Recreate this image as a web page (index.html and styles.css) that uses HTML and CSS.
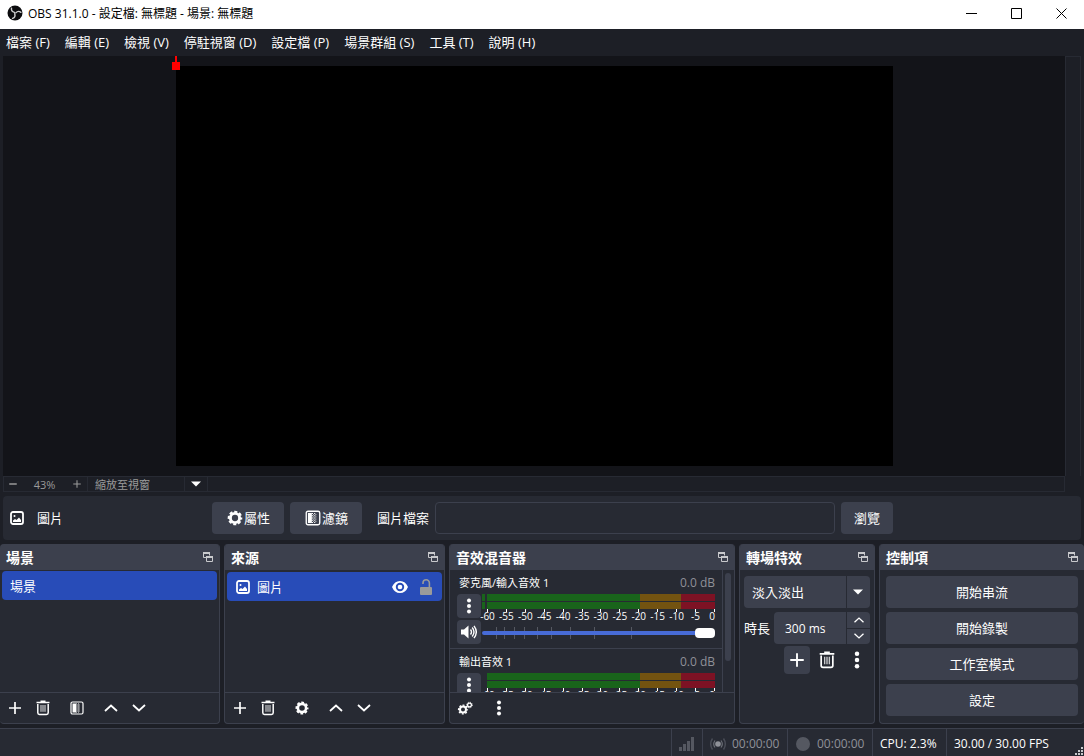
FILE: index.html
```
<!DOCTYPE html>
<html lang="zh-Hant">
<head>
    <meta charset="UTF-8">
    <meta name="viewport" content="width=device-width, initial-scale=1.0">
    <title>OBS 31.1.0</title>
    <link rel="stylesheet" href="styles.css">
</head>
<body>
    <!-- Shared icons -->
    <svg class="sprite" aria-hidden="true">
        <symbol id="i-plus" viewBox="0 0 16 16"><path d="M8 2v12M2 8h12" stroke="currentColor" stroke-width="1.700" fill="none"/></symbol>
        <symbol id="i-minus" viewBox="0 0 16 16"><path d="M2 8h12" stroke="currentColor" stroke-width="2.4" fill="none"/></symbol>
        <symbol id="i-trash" viewBox="0 0 16 16">
            <path d="M5.500 1.300h5M1.500 2.600h13" stroke="currentColor" stroke-width="1.500" fill="none"/>
            <path d="M2.800 4v8.800q0 1.700 1.700 1.700h7q1.700 0 1.700-1.700V4" stroke="currentColor" stroke-width="1.500" fill="none"/>
            <path d="M6 5v6.800M8 5v6.800M10 5v6.800" stroke="currentColor" stroke-width=".9" fill="none"/>
        </symbol>
        <symbol id="i-filter" viewBox="0 0 16 16">
            <rect x="2" y="2" width="12" height="12" rx="1.500" stroke="currentColor" stroke-width="1.200" fill="none"/>
            <path d="M3.500 3.500h3.500v9H3.500z" fill="currentColor"/>
            <path d="M7.500 3.500v9M9.500 3.500v9" stroke="currentColor" stroke-width="1" stroke-dasharray="1 1" fill="none"/>
            <path d="M8.500 4.500v8M10.500 4.500v8" stroke="currentColor" stroke-width="1" stroke-dasharray="1 1" opacity=".6" fill="none"/>
        </symbol>
        <symbol id="i-up" viewBox="0 0 16 16"><path d="M2 11l6-5.500 6 5.500" stroke="currentColor" stroke-width="1.800" fill="none"/></symbol>
        <symbol id="i-down" viewBox="0 0 16 16"><path d="M2 5l6 5.500 6-5.500" stroke="currentColor" stroke-width="1.800" fill="none"/></symbol>
        <symbol id="i-gear" viewBox="0 0 16 16">
            <circle cx="8" cy="8" r="4.100" stroke="currentColor" stroke-width="2.600" fill="none"/>
            <circle cx="8" cy="8" r="5.600" stroke="currentColor" stroke-width="1.800" stroke-dasharray="2.700 1.698" stroke-dashoffset="1.350" fill="none"/>
        </symbol>
        <symbol id="i-gears" viewBox="0 0 16 16">
            <circle cx="6" cy="9.500" r="3" stroke="currentColor" stroke-width="2" fill="none"/>
            <circle cx="6" cy="9.500" r="4.400" stroke="currentColor" stroke-width="1.400" stroke-dasharray="1.900 1.556" stroke-dashoffset=".95" fill="none"/>
            <circle cx="12.500" cy="5" r="1.900" stroke="currentColor" stroke-width="1.300" fill="none"/>
            <circle cx="12.500" cy="5" r="2.800" stroke="currentColor" stroke-width="1" stroke-dasharray="1.100 1.100" fill="none"/>
        </symbol>
        <symbol id="i-dots" viewBox="0 0 16 16"><circle cx="8" cy="2.500" r="2"/><circle cx="8" cy="8" r="2"/><circle cx="8" cy="13.500" r="2"/></symbol>
        <symbol id="i-image" viewBox="0 0 16 16">
            <rect x="2" y="2" width="12" height="12" rx="2" stroke="currentColor" stroke-width="1.800" fill="none"/>
            <circle cx="5.500" cy="6" r="1"/>
            <path d="M4 12v-1.500l2-1.500 1.500 1L10 7.500l2 2.500v2z"/>
        </symbol>
        <symbol id="i-eye" viewBox="0 0 16 16">
            <path fill-rule="evenodd" d="M0 8Q2.500 2 8 2t8 6Q13.500 14 8 14T0 8zM8 3.800a4.200 4.200 0 1 0 0 8.400 4.200 4.200 0 0 0 0-8.400z"/>
            <circle cx="8" cy="8" r="2.300"/>
        </symbol>
        <symbol id="i-unlock" viewBox="0 0 16 16">
            <rect x="2" y="8" width="12" height="8" rx="1"/>
            <path d="M5 5V4a3.200 3.200 0 0 1 6.400 0v4.500" stroke="currentColor" stroke-width="1.600" fill="none"/>
        </symbol>
        <symbol id="i-float" viewBox="0 0 12 12">
            <path d="M1.500 6.500v-4h6v2M1.500 6.500h3M4.500 6.500v4h6v-4" stroke="currentColor" fill="none"/>
            <path d="M1 1h7v2H1zM4 5h7v2H4z"/>
        </symbol>
        <symbol id="i-caret" viewBox="0 0 10 6"><path d="M0 .5h10L5 5.500z"/></symbol>
        <symbol id="i-speaker" viewBox="0 0 16 16">
            <path d="M0 5.500h3L7.500 1.500v13L3 10.500H0z"/>
            <path d="M9.500 5.500q2 2.500 0 5M11.200 3.500q3.600 4.500 0 9M13 1.800q4.600 6.200 0 12.400" stroke="currentColor" stroke-width="1.400" fill="none"/>
        </symbol>
    </svg>

    <header class="titlebar">
        <svg class="logo" viewBox="0 0 16 16">
            <circle cx="8" cy="8" r="7.500" fill="#0c0c0e"/>
            <g fill="none" stroke="#d0d0d0" stroke-width="1.400" stroke-linecap="round">
                <path d="M4.500 3.200q-.6 3.400 3 4.200"/>
                <path d="M4.500 3.200q-.6 3.400 3 4.200" transform="rotate(120 8 8)"/>
                <path d="M4.500 3.200q-.6 3.400 3 4.200" transform="rotate(240 8 8)"/>
            </g>
        </svg>
        <span class="title">OBS 31.1.0 - 設定檔: 無標題 - 場景: 無標題</span>
        <button class="win-btn" aria-label="最小化"><svg viewBox="0 0 11 11"><path d="M0 5.500h11"/></svg></button>
        <button class="win-btn" aria-label="最大化"><svg viewBox="0 0 11 11"><path d="M.5.5h10v10H.5z"/></svg></button>
        <button class="win-btn" aria-label="關閉"><svg viewBox="0 0 11 11"><path d="M.5.5l10 10M10.500.5l-10 10"/></svg></button>
    </header>

    <nav class="menubar">
        <button>檔案 (F)</button>
        <button>編輯 (E)</button>
        <button>檢視 (V)</button>
        <button>停駐視窗 (D)</button>
        <button>設定檔 (P)</button>
        <button>場景群組 (S)</button>
        <button>工具 (T)</button>
        <button>說明 (H)</button>
    </nav>

    <!-- Preview -->
    <main class="preview">
        <div class="stage">
            <div class="canvas"><span class="handle"></span></div>
        </div>
        <div class="preview-scroll"></div>
    </main>
    <div class="zoombar">
        <button class="zoom-out" aria-label="縮小"><svg><use href="#i-minus"/></svg></button>
        <span class="zoom-value">43%</span>
        <button class="zoom-in" aria-label="放大"><svg><use href="#i-plus"/></svg></button>
        <span class="zoom-mode">縮放至視窗</span>
        <button class="zoom-menu" aria-label="縮放模式"><svg class="caret"><use href="#i-caret"/></svg></button>
    </div>

    <!-- Source context bar -->
    <section class="context">
        <div class="context-source"><svg><use href="#i-image"/></svg><span>圖片</span></div>
        <button class="btn tool"><svg><use href="#i-gear"/></svg>屬性</button>
        <button class="btn tool"><svg><use href="#i-filter"/></svg>濾鏡</button>
        <label for="image-file">圖片檔案</label>
        <input id="image-file" type="text">
        <button class="btn browse">瀏覽</button>
    </section>

    <div class="docks">
        <section class="dock scenes">
            <h2>場景<svg><use href="#i-float"/></svg></h2>
            <div class="dock-body">
                <button class="row selected">場景</button>
            </div>
            <div class="toolbar">
                <button aria-label="新增"><svg><use href="#i-plus"/></svg></button>
                <button aria-label="移除"><svg><use href="#i-trash"/></svg></button>
                <button class="group" aria-label="濾鏡"><svg><use href="#i-filter"/></svg></button>
                <button class="group" aria-label="上移"><svg><use href="#i-up"/></svg></button>
                <button aria-label="下移"><svg><use href="#i-down"/></svg></button>
            </div>
        </section>

        <section class="dock sources">
            <h2>來源<svg><use href="#i-float"/></svg></h2>
            <div class="dock-body">
                <div class="row selected">
                    <svg><use href="#i-image"/></svg>
                    <span class="row-name">圖片</span>
                    <button aria-label="顯示"><svg><use href="#i-eye"/></svg></button>
                    <button class="lock" aria-label="鎖定"><svg><use href="#i-unlock"/></svg></button>
                </div>
            </div>
            <div class="toolbar">
                <button aria-label="新增"><svg><use href="#i-plus"/></svg></button>
                <button aria-label="移除"><svg><use href="#i-trash"/></svg></button>
                <button class="group" aria-label="屬性"><svg><use href="#i-gear"/></svg></button>
                <button class="group" aria-label="上移"><svg><use href="#i-up"/></svg></button>
                <button aria-label="下移"><svg><use href="#i-down"/></svg></button>
            </div>
        </section>

        <section class="dock mixer">
            <h2>音效混音器<svg><use href="#i-float"/></svg></h2>
            <div class="dock-body">
                <div class="channels">
                    <div class="channel">
                        <div class="channel-head"><label for="vol-mic">麥克風/輸入音效 1</label><output>0.0 dB</output></div>
                        <div class="channel-body">
                            <div class="channel-btns">
                                <button class="btn" aria-label="選項"><svg><use href="#i-dots"/></svg></button>
                                <button class="btn" aria-label="靜音"><svg><use href="#i-speaker"/></svg></button>
                            </div>
                            <div class="channel-levels">
                                <div class="meter live"><i></i><i></i></div>
                                <div class="scale">
                                    <span>-60</span><span>-55</span><span>-50</span><span>-45</span><span>-40</span><span>-35</span><span>-30</span><span>-25</span><span>-20</span><span>-15</span><span>-10</span><span>-5</span><span>0</span>
                                </div>
                                <div class="fader">
                                    <svg viewBox="0 0 233 12" preserveAspectRatio="none"><path d="M14.500 0v12M22.500 0v12M32.500 0v12M42.500 0v12M55.500 0v12M69.500 0v12M88.500 0v12M112.500 0v12M149.500 0v12"/></svg>
                                    <input id="vol-mic" type="range" min="0" max="100" value="100">
                                </div>
                            </div>
                        </div>
                    </div>
                    <div class="channel">
                        <div class="channel-head"><label for="vol-out">輸出音效 1</label><output>0.0 dB</output></div>
                        <div class="channel-body">
                            <div class="channel-btns">
                                <button class="btn" aria-label="選項"><svg><use href="#i-dots"/></svg></button>
                                <button class="btn" aria-label="靜音"><svg><use href="#i-speaker"/></svg></button>
                            </div>
                            <div class="channel-levels">
                                <div class="meter"><i></i><i></i></div>
                                <div class="scale">
                                    <span>-60</span><span>-55</span><span>-50</span><span>-45</span><span>-40</span><span>-35</span><span>-30</span><span>-25</span><span>-20</span><span>-15</span><span>-10</span><span>-5</span><span>0</span>
                                </div>
                                <div class="fader">
                                    <input id="vol-out" type="range" min="0" max="100" value="100">
                                </div>
                            </div>
                        </div>
                    </div>
                </div>
                <div class="scrollbar"><div class="thumb"></div></div>
            </div>
            <div class="toolbar">
                <button aria-label="進階音效屬性"><svg><use href="#i-gears"/></svg></button>
                <button class="group" aria-label="選單"><svg><use href="#i-dots"/></svg></button>
            </div>
        </section>

        <section class="dock transitions">
            <h2>轉場特效<svg><use href="#i-float"/></svg></h2>
            <div class="dock-body">
                <div class="select">
                    <select aria-label="轉場特效"><option>淡入淡出</option></select>
                    <svg class="caret"><use href="#i-caret"/></svg>
                </div>
                <div class="duration">
                    <label for="duration">時長</label>
                    <div class="spin">
                        <input id="duration" type="text" value="300 ms">
                        <div class="spin-btns">
                            <button aria-label="增加"><svg><use href="#i-up"/></svg></button>
                            <button aria-label="減少"><svg><use href="#i-down"/></svg></button>
                        </div>
                    </div>
                </div>
                <div class="transition-tools">
                    <button class="btn" aria-label="新增"><svg><use href="#i-plus"/></svg></button>
                    <button aria-label="移除"><svg><use href="#i-trash"/></svg></button>
                    <button aria-label="選項"><svg><use href="#i-dots"/></svg></button>
                </div>
            </div>
        </section>

        <section class="dock controls">
            <h2>控制項<svg><use href="#i-float"/></svg></h2>
            <div class="dock-body">
                <button class="btn">開始串流</button>
                <button class="btn">開始錄製</button>
                <button class="btn">工作室模式</button>
                <button class="btn">設定</button>
            </div>
        </section>
    </div>

    <footer class="statusbar">
        <div class="cell">
            <svg viewBox="0 0 16 16"><path d="M0 11h3v4H0zM4 8h3v7H4zM8 5h3v10H8zM12 1h3v14h-3z" fill="#555861"/></svg>
        </div>
        <div class="cell muted">
            <svg viewBox="0 0 16 16">
                <circle cx="8" cy="8" r="2.800"/>
                <path d="M5 4.500q-2.600 3.500 0 7M11 4.500q2.600 3.500 0 7" stroke="#6c6f77" stroke-width="1.200" fill="none"/>
                <path d="M2.500 2.500q-3.600 5.500 0 11M13.500 2.500q3.600 5.500 0 11" stroke="#4a4d57" stroke-width="1.400" fill="none"/>
            </svg>
            <span>00:00:00</span>
        </div>
        <div class="cell muted">
            <svg viewBox="0 0 16 16"><circle cx="8" cy="8" r="7" fill="#555861"/></svg>
            <span>00:00:00</span>
        </div>
        <div class="cell cpu">CPU: 2.3%</div>
        <div class="cell fps">30.00 / 30.00 FPS</div>
        <svg class="grip" viewBox="0 0 9 9"><path d="M6 0h2v2H6zM3 3h2v2H3zM6 3h2v2H6zM0 6h2v2H0zM3 6h2v2H3zM6 6h2v2H6z"/></svg>
    </footer>
</body>
</html>
```
FILE: styles.css
```
* {
    box-sizing: border-box;
}
body {
    margin: 0;
    height: 100vh;
    display: flex;
    flex-direction: column;
    background-color: #1d1f26;
    color: #fefefe;
    font-family: "Open Sans", "Noto Sans CJK TC", sans-serif;
    font-size: 13px;
    line-height: 16px;
    overflow: hidden;
}
button, input, select {
    font: inherit;
    color: inherit;
    margin: 0;
    padding: 0;
    border: none;
    background: none;
}
button {
    display: flex;
    align-items: center;
    justify-content: center;
}
svg {
    display: block;
    width: 16px;
    height: 16px;
    fill: currentColor;
    flex: none;
}
.sprite {
    position: absolute;
    width: 0;
    height: 0;
}
.caret {
    width: 10px;
    height: 6px;
}
.btn {
    background-color: #3c404d;
    border-radius: 4px;
}
.btn:hover {
    background-color: #4e5262;
}

/* Title bar */
.titlebar {
    height: 29px;
    flex: none;
    display: flex;
    align-items: center;
    padding-left: 7px;
    background-color: #fff;
    color: #000;
    font-size: 12px;
}
.title {
    flex: 1;
    margin-left: 5px;
    padding-bottom: 2px;
}
.titlebar .logo {
    margin-bottom: 3px;
}
.win-btn {
    width: 45px;
    height: 27px;
    align-self: flex-start;
}
.win-btn svg {
    width: 11px;
    height: 11px;
    fill: none;
    stroke: #000;
}

/* Menu */
.menubar {
    height: 27px;
    flex: none;
    display: flex;
    gap: 15px;
    padding: 0 6px 2px;
}

/* Preview */
.preview {
    flex: 1;
    min-height: 0;
    display: flex;
    margin: 0 3px;
}
.stage {
    flex: 1;
    display: flex;
    justify-content: center;
    padding: 10px 0;
    background-color: #131419;
}
.canvas {
    position: relative;
    height: 100%;
    aspect-ratio: 717 / 400;
    background-color: #000;
}
.handle {
    position: absolute;
    top: -4px;
    left: -4px;
    width: 8px;
    height: 8px;
    background-color: #f00;
}
.handle::before {
    content: "";
    position: absolute;
    left: 3px;
    bottom: 8px;
    width: 2px;
    height: 6px;
    background-color: #f00;
}
.preview-scroll {
    width: 16px;
    border: 1px solid #272a33;
    border-bottom: none;
}
.zoombar {
    height: 16px;
    flex: none;
    display: flex;
    align-items: stretch;
    margin: 0 19px 0 3px;
    border: 1px solid #272a33;
    color: #9a9a9a;
    font-size: 11px;
    line-height: 15px;
}
.zoombar svg {
    width: 10px;
    height: 10px;
}
.zoombar .caret {
    height: 6px;
    color: #fefefe;
}
.zoom-out {
    width: 18px;
}
.zoom-value {
    width: 45px;
    text-align: center;
}
.zoom-in {
    width: 20px;
}
.zoom-in svg {
    stroke-width: 2;
}
.zoom-mode {
    width: 97px;
    padding-left: 7px;
    border-left: 1px solid #272a33;
}
.zoom-menu {
    width: 24px;
    border: solid #272a33;
    border-width: 0 1px;
}

/* Source context bar */
.context {
    flex: none;
    display: flex;
    align-items: center;
    gap: 6px;
    margin: 4px 3px;
    padding: 6px;
    background-color: #272a33;
    border-radius: 4px;
}
.context-source {
    display: flex;
    align-items: center;
    gap: 12px;
    width: 197px;
}
.context .btn {
    height: 32px;
}
.context .tool {
    width: 72px;
}
.context .tool svg {
    width: 18px;
    height: 18px;
}
.context label {
    margin-left: 9px;
}
.context input {
    width: 400px;
    height: 32px;
    padding: 0 8px;
    border: 1px solid #3c404d;
    border-radius: 4px;
}
.browse {
    width: 52px;
}

/* Docks */
.docks {
    flex: none;
    height: 180px;
    display: grid;
    grid-template-columns: 220fr 221fr 286fr 136fr 205fr;
    gap: 4px;
}
.dock {
    min-width: 0;
    display: flex;
    flex-direction: column;
    border: 1px solid #3c404d;
    border-top: none;
    border-radius: 4px;
    background-color: #272a33;
    overflow: hidden;
}
.dock h2 {
    height: 26px;
    flex: none;
    display: flex;
    align-items: center;
    justify-content: space-between;
    margin: 0;
    padding: 2px 5px 0 6px;
    background-color: #3c404d;
    font-size: 14px;
}
.dock h2 svg {
    width: 12px;
    height: 12px;
    margin-bottom: 2px;
    color: #c8c9cc;
}
.dock-body {
    flex: 1;
    min-height: 0;
}
.toolbar {
    height: 31px;
    flex: none;
    display: flex;
    padding-left: 1px;
    border-top: 1px solid #3c404d;
}
.toolbar button {
    width: 28px;
}
.toolbar .group {
    margin-left: 6px;
}
.scenes {
    border-left: none;
}
.scenes .dock-body {
    padding: 1px 2px;
}
.sources .dock-body {
    padding: 2px;
}
.row {
    width: 100%;
    height: 29px;
    display: flex;
    align-items: center;
    justify-content: flex-start;
    padding: 0 8px;
    border-radius: 4px;
}
.row.selected {
    background-color: #284cb8;
}
.row-name {
    flex: 1;
    margin-left: 6px;
}
.row button {
    margin-left: 10px;
}
.lock {
    color: #9a9a9a;
}

/* Audio mixer */
.mixer .dock-body {
    display: flex;
    overflow: hidden;
}
.channels {
    flex: 1;
    min-width: 0;
}
.channel {
    padding: 5px 7px 4px;
    border-bottom: 1px solid #3c404d;
}
.channel-head {
    display: flex;
    justify-content: space-between;
    padding-left: 2px;
    margin-bottom: 3px;
    font-size: 11px;
}
.channel-head output {
    color: #8f9198;
    font-size: 12px;
}
.channel-body {
    display: flex;
    gap: 1px;
}
.channel-btns {
    display: grid;
    gap: 2px;
}
.channel-btns .btn {
    width: 24px;
    height: 24px;
}
.channel-levels {
    flex: 1;
}
.meter {
    display: grid;
    gap: 1px;
    margin-left: 5px;
    position: relative;
}
.meter i {
    height: 7px;
    background: linear-gradient(to right, #19641b 0 67%, #735310 67% 85%, #7d1224 85%);
}
.meter.live::before {
    content: "";
    position: absolute;
    left: -5px;
    width: 3px;
    height: 15px;
    background: linear-gradient(#19641b 7px, #272a33 7px 8px, #19641b 8px);
}
.scale {
    height: 18px;
    display: flex;
    justify-content: space-between;
    margin-left: 5px;
    font-size: 10px;
    line-height: 10px;
}
.scale span {
    width: 1px;
    display: flex;
    flex-direction: column;
    align-items: center;
}
.scale span::before {
    content: "";
    width: 1px;
    height: 3px;
    margin-bottom: -1px;
    flex: none;
    background-color: #fefefe;
}
.scale span:last-child {
    align-items: flex-end;
}
.fader {
    position: relative;
    height: 12px;
}
.fader svg {
    position: absolute;
    width: 100%;
    height: 12px;
    stroke: #555861;
}
.fader input {
    position: absolute;
    appearance: none;
    width: 100%;
    height: 12px;
}
.fader input::-webkit-slider-runnable-track {
    height: 4px;
    border-radius: 2px;
    background-color: #476bd7;
}
.fader input::-webkit-slider-thumb {
    appearance: none;
    width: 20px;
    height: 10px;
    margin-top: -3px;
    border-radius: 4px;
    background-color: #fefefe;
}
.scrollbar {
    width: 12px;
    padding: 3px 3px 0 2px;
    border-left: 1px solid #3c404d;
}
.thumb {
    height: 88px;
    border-radius: 3px;
    background-color: #3c404d;
}

/* Scene transitions */
.transitions .dock-body {
    padding: 6px 4px;
}
.select {
    position: relative;
    margin-bottom: 4px;
}
.select select {
    appearance: none;
    display: block;
    width: 100%;
    height: 32px;
    padding-left: 8px;
    border-radius: 4px;
    background: linear-gradient(#272a33, #272a33) right 23px top / 1px 100% no-repeat #3c404d;
}
.select .caret {
    position: absolute;
    top: 13px;
    right: 7px;
    pointer-events: none;
}
.duration {
    display: flex;
    align-items: center;
    justify-content: space-between;
    margin-bottom: 2px;
}
.spin {
    width: 96px;
    height: 32px;
    display: flex;
    border-radius: 4px;
    background-color: #3c404d;
}
.spin input {
    flex: 1;
    min-width: 0;
    padding: 2px 0 0 11px;
    font-size: 12px;
}
.spin-btns {
    width: 24px;
    display: grid;
    border-left: 1px solid #272a33;
}
.spin-btns button + button {
    border-top: 1px solid #272a33;
}
.spin-btns svg {
    width: 12px;
    height: 12px;
}
.transition-tools {
    display: flex;
    justify-content: flex-end;
    gap: 4px;
}
.transition-tools button {
    width: 26px;
    height: 28px;
}
.transition-tools svg {
    width: 18px;
    height: 18px;
}

/* Controls */
.controls {
    border-right: none;
}
.controls .dock-body {
    display: grid;
    grid-auto-rows: 32px;
    gap: 4px;
    padding: 6px;
}

/* Status bar */
.statusbar {
    position: relative;
    height: 28px;
    flex: none;
    display: flex;
    justify-content: flex-end;
    margin-top: 4px;
    border-top: 1px solid #3c404d;
    background-color: #272a33;
    font-size: 12px;
}
.cell {
    display: flex;
    align-items: center;
    gap: 6px;
    padding: 2px 7px 0;
    border-left: 1px solid #3c404d;
}
.muted {
    width: 85px;
    color: #8f9198;
}
.cpu {
    width: 74px;
}
.fps {
    width: 138px;
}
.grip {
    position: absolute;
    right: 0;
    bottom: 0;
    width: 9px;
    height: 9px;
    color: #c8c9cc;
}
```
